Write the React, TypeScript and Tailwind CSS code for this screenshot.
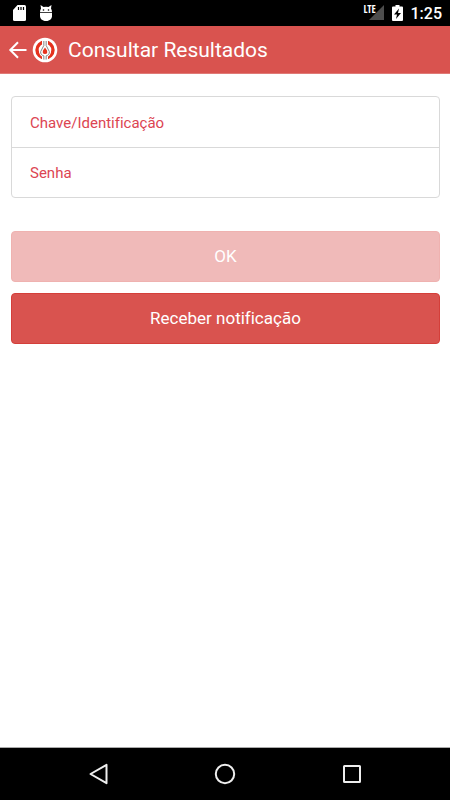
import { useState } from 'react';

function StatusBar() {
  return (
    <div className="h-[26px] shrink-0 bg-black flex items-center justify-between pl-3 pr-2 text-white">
      <div className="flex items-center gap-3">
        {/* SD card */}
        <svg className="w-[15px] h-[18px]" viewBox="0 0 15 18" fill="none">
          <path d="M5.5 1H12.5Q14 1 14 2.5V15.5Q14 17 12.5 17H2.5Q1 17 1 15.5V6Z" fill="#fff" />
          <path d="M6.5 3V6M9 3V6M11.5 3V6" stroke="#000" strokeWidth="1.2" />
        </svg>
        {/* Android debug */}
        <svg className="w-[14px] h-[18px]" viewBox="0 0 14 18" fill="none">
          <path d="M1.5 1L4.5 3Q7 2.4 9.5 3L12.5 1L12 4.5Q13 6 13 8.3H1Q1 6 2 4.5Z" fill="#fff" />
          <path d="M1 9H13V12C13 14.5 11 17 7 17C3 17 1 14.5 1 12Z" fill="#fff" />
          <circle cx="4.5" cy="6" r="0.8" fill="#000" />
          <circle cx="9.5" cy="6" r="0.8" fill="#000" />
        </svg>
      </div>
      <div className="flex items-center gap-2">
        <div className="relative w-5 h-4">
          <svg className="w-full h-full" viewBox="0 0 20 16">
            <path d="M20 0V15H5Z" fill="#4d4d4d" />
          </svg>
          <span className="absolute left-0 top-0 text-[10px] leading-[8px] font-bold font-['Open_Sans_Condensed','Roboto_Condensed',Roboto,sans-serif]">
            LTE
          </span>
        </div>
        <svg className="w-[11px] h-4" viewBox="0 0 11 16">
          <path d="M3.5 0H7.5V1.5H10Q11 1.5 11 2.5V15Q11 16 10 16H1Q0 16 0 15V2.5Q0 1.5 1 1.5H3.5Z" fill="#fff" />
          <path d="M7 3.5L2 9.5H5L4 14L9 8H6Z" fill="#000" />
        </svg>
        <span className="text-base leading-6 pt-px font-medium">1:25</span>
      </div>
    </div>
  );
}

function Logo() {
  return (
    <svg className="w-[26px] h-[26px]" viewBox="0 0 26 26" fill="none">
      <circle cx="13" cy="13" r="12.3" fill="#fff" />
      <circle cx="13" cy="13" r="8" stroke="#e5311d" strokeWidth="3.4" />
      <path d="M10 2.5H16V7.5L19 14.5Q18.500 18.500 16 19.500V23.500H10V19.500Q7.500 18.500 7 14.500L10 7.500Z" fill="#fff" />
      <path d="M11.8 4V8.500L8.700 14.500Q8.200 18 11.800 18.800V22.500M14.200 4V8.500L17.300 14.500Q17.800 18 14.200 18.800V22.500" stroke="#888" strokeWidth="1" />
      <path d="M13 4V9M13 19V22.500" stroke="#ccc" strokeWidth="1" />
      <path d="M13 10.500L15 13.500Q16 17 13 17Q10 17 11 13.500Z" fill="#e5311d" />
    </svg>
  );
}

function NavBar() {
  return (
    <nav className="h-[53px] shrink-0 bg-black border-t border-[#aaa] flex items-center justify-between px-[88px]">
      <button type="button" aria-label="Voltar">
        <svg className="w-5 h-[22px]" viewBox="0 0 20 22" fill="none">
          <path d="M18.5 1.8V20.2L2.5 11Z" stroke="#eee" strokeWidth="2" strokeLinejoin="round" />
        </svg>
      </button>
      <button type="button" aria-label="Início">
        <svg className="w-[22px] h-[22px]" viewBox="0 0 22 22" fill="none">
          <circle cx="11" cy="11" r="9.2" stroke="#eee" strokeWidth="2" />
        </svg>
      </button>
      <button type="button" aria-label="Recentes">
        <svg className="w-5 h-5" viewBox="0 0 20 20" fill="none">
          <rect x="2" y="2" width="16" height="16" rx="0.5" stroke="#eee" strokeWidth="2" />
        </svg>
      </button>
    </nav>
  );
}

export default function App() {
  const [chave, setChave] = useState('');
  const [senha, setSenha] = useState('');

  return (
    <div className="min-h-screen bg-white flex flex-col font-[Roboto,sans-serif] [font-variant-ligatures:none]">
      <StatusBar />

      <header className="h-12 shrink-0 bg-[#d9534f] border-b border-[#e07a76] flex items-center pl-2 text-white">
        <button type="button" aria-label="Voltar" className="mr-1">
          <svg className="w-5 h-5" viewBox="0 0 20 20" fill="none">
            <path d="M18.5 10H2.5M10 2.3L2.3 10L10 17.7" stroke="currentColor" strokeWidth="2" />
          </svg>
        </button>
        <Logo />
        <h1 className="ml-[10px] text-[21px] leading-7">Consultar Resultados</h1>
      </header>

      <main className="flex-1 pl-[11px] pr-[10px] pt-[22px]">
        <form onSubmit={(e) => e.preventDefault()}>
          <div className="border border-[#d9d9d9] rounded-sm text-[15px] text-[#dc4552]">
            <div className="h-[50px] flex items-center px-[18px] pt-[2px] gap-3">
              <label htmlFor="chave">Chave/Identificação</label>
              <input
                id="chave"
                type="text"
                value={chave}
                onChange={(e) => setChave(e.target.value)}
                className="flex-1 min-w-0 h-full text-gray-800 focus:outline-none"
              />
            </div>
            <div className="h-[50px] flex items-center px-[18px] pt-[2px] gap-3 border-t border-[#d9d9d9]">
              <label htmlFor="senha">Senha</label>
              <input
                id="senha"
                type="password"
                value={senha}
                onChange={(e) => setSenha(e.target.value)}
                className="flex-1 min-w-0 h-full text-gray-800 focus:outline-none"
              />
            </div>
          </div>

          <button
            type="submit"
            disabled={!chave || !senha}
            className="mt-[33px] w-full h-[51px] rounded bg-[#d9534f] border border-[#d43f3a] text-white text-[17px] disabled:bg-[#f0bab9] disabled:border-[#efb2b0]"
          >
            OK
          </button>
          <button
            type="button"
            className="mt-[11px] w-full h-[51px] rounded bg-[#d9534f] border border-[#d43f3a] text-white text-[17px]"
          >
            Receber notificação
          </button>
        </form>
      </main>

      <NavBar />
    </div>
  );
}
